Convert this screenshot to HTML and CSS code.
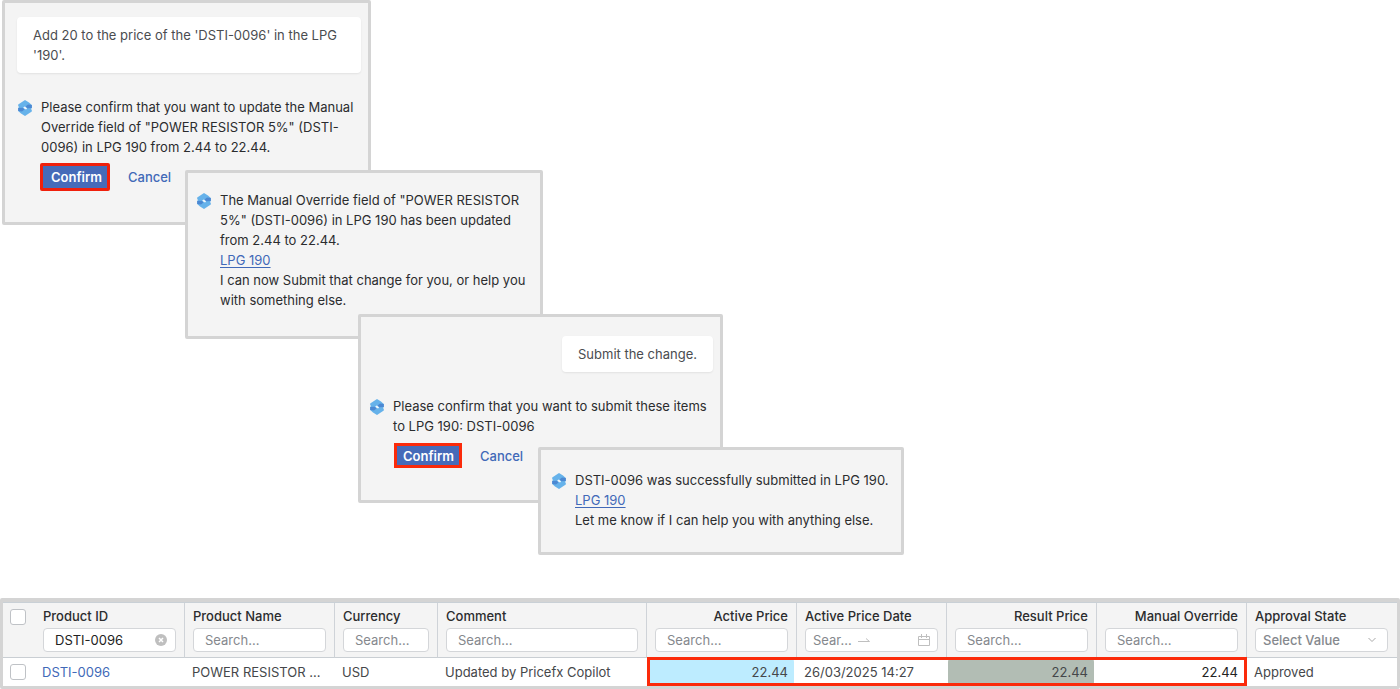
FILE: index.html
```html
<!DOCTYPE html>
<html lang="en">
<head>
<meta charset="utf-8">
<title>Copilot price update</title>
<link rel="stylesheet" href="styles.css">
</head>
<body>
<svg class="defs" aria-hidden="true">
  <symbol id="logo" viewBox="0 0 14 16">
    <path fill="#66b2ea" d="M7 0 11 2.500 13.800 5v3L13 9l.8 1v1.500L7 16 3 13.500.200 11V8L1 7 .2 6V4.500z"/>
    <path fill="#4c88d2" d="M.2 8 4.500 7.800 6.500 9.500 4 11.500.200 11z"/>
    <path fill="#4c88d2" d="M13.800 8 9.500 8.200 7.500 6.500 10 4.500 13.800 5z"/>
    <path fill="#f4f8fc" d="M5.200 7.200 7 6.500 9 8.500 8.600 9.200 7 9.300z"/>
  </symbol>
</svg>

<main class="page">
  <section class="chat">
    <article class="card card-request">
      <p class="bubble">Add 20 to the price of the 'DSTI-0096' in the LPG '190'.</p>
      <div class="message">
        <svg class="logo"><use href="#logo"/></svg>
        <div class="body">
          <p>Please confirm that you want to update the Manual Override field of "POWER RESISTOR 5%" (DSTI-0096) in LPG 190 from 2.44 to 22.44.</p>
          <div class="actions">
            <button class="confirm" type="button">Confirm</button>
            <button class="cancel" type="button">Cancel</button>
          </div>
        </div>
      </div>
    </article>

    <article class="card card-updated">
      <div class="message">
        <svg class="logo"><use href="#logo"/></svg>
        <div class="body">
          <p>The Manual Override field of "POWER RESISTOR 5%" (DSTI-0096) in LPG 190 has been updated from 2.44 to 22.44.</p>
          <p><a class="link" href="#">LPG 190</a></p>
          <p>I can now Submit that change for you, or help you with something else.</p>
        </div>
      </div>
    </article>

    <article class="card card-submit">
      <p class="bubble bubble-short">Submit the change.</p>
      <div class="message">
        <svg class="logo"><use href="#logo"/></svg>
        <div class="body">
          <p>Please confirm that you want to submit these items to LPG 190: DSTI-0096</p>
          <div class="actions">
            <button class="confirm" type="button">Confirm</button>
            <button class="cancel" type="button">Cancel</button>
          </div>
        </div>
      </div>
    </article>

    <article class="card card-done">
      <div class="message">
        <svg class="logo"><use href="#logo"/></svg>
        <div class="body">
          <p>DSTI-0096 was successfully submitted in LPG 190.</p>
          <p><a class="link" href="#">LPG 190</a></p>
          <p>Let me know if I can help you with anything else.</p>
        </div>
      </div>
    </article>
  </section>

  <div class="grid">
    <table class="prices">
      <colgroup>
        <col class="w-check"><col class="w-std"><col class="w-std"><col class="w-currency"><col class="w-comment">
        <col class="w-std"><col class="w-std"><col class="w-std"><col class="w-std"><col class="w-std">
      </colgroup>
      <thead>
        <tr>
          <th class="check"><input type="checkbox" aria-label="Select all rows"></th>
          <th>
            <label for="f-id">Product ID</label>
            <div class="field">
              <input id="f-id" type="text" value="DSTI-0096">
              <button class="clear" type="button" aria-label="Clear">
                <svg viewBox="0 0 12 12"><circle cx="6" cy="6" r="6" fill="#bfbfbf"/><path d="M4 4l4 4M8 4l-4 4" stroke="#fff" stroke-width="1.5"/></svg>
              </button>
            </div>
          </th>
          <th><label for="f-name">Product Name</label><div class="field"><input id="f-name" type="text" placeholder="Search..."></div></th>
          <th><label for="f-cur">Currency</label><div class="field"><input id="f-cur" type="text" placeholder="Search..."></div></th>
          <th><label for="f-com">Comment</label><div class="field"><input id="f-com" type="text" placeholder="Search..."></div></th>
          <th class="num"><label for="f-act">Active Price</label><div class="field"><input id="f-act" type="text" placeholder="Search..."></div></th>
          <th>
            <label for="f-date">Active Price Date</label>
            <div class="field field-date">
              <input id="f-date" type="text" placeholder="Sear...">
              <svg class="arrow" viewBox="0 0 12 8"><path d="M0 5.500h11.500L8 2.500" fill="none" stroke="#bfbfbf"/></svg>
              <svg class="calendar" viewBox="0 0 12 12"><path d="M.5 2.500h11v9H.5zM.5 5.500h11M3.500 0v4M8.500 0v4" fill="none" stroke="#bfbfbf"/></svg>
            </div>
          </th>
          <th class="num"><label for="f-res">Result Price</label><div class="field"><input id="f-res" type="text" placeholder="Search..."></div></th>
          <th class="num"><label for="f-man">Manual Override</label><div class="field"><input id="f-man" type="text" placeholder="Search..."></div></th>
          <th>
            <label for="f-state">Approval State</label>
            <div class="field field-select">
              <select id="f-state"><option>Select Value</option></select>
              <svg class="chevron" viewBox="0 0 8 6"><path d="M.5 1 4 4.500 7.500 1" fill="none" stroke="#a8a8a8"/></svg>
            </div>
          </th>
        </tr>
      </thead>
      <tbody>
        <tr>
          <td class="check"><input type="checkbox" aria-label="Select DSTI-0096"></td>
          <td><a class="id" href="#">DSTI-0096</a></td>
          <td>POWER RESISTOR ...</td>
          <td>USD</td>
          <td>Updated by Pricefx Copilot</td>
          <td class="num fill framed"><span class="tint tint-blue">22.44</span></td>
          <td>26/03/2025 14:27</td>
          <td class="num fill"><span class="tint tint-green">22.44</span></td>
          <td class="num override">22.44</td>
          <td>Approved</td>
        </tr>
      </tbody>
    </table>
  </div>
</main>
</body>
</html>
```
FILE: styles.css
```css
*, *::before, *::after { box-sizing: border-box; }

body {
  margin: 0;
  background: #fff;
  color: #2b2c2e;
  font: 13px/20px Inter, "Liberation Sans", sans-serif;
}

p { margin: 0; }
button, input, select { font: inherit; }
.defs { display: none; }

.page { display: flex; flex-direction: column; }

/* Cascading conversation cards */
.chat { display: flex; flex-direction: column; align-items: flex-start; }

.card {
  position: relative;
  border: 3px solid #d4d4d4;
  border-radius: 2px;
  background: #f4f4f4;
}

.card-request { width: 369px; margin-left: 2px; padding: 14px 7px 31px 12px; }
.card-updated { width: 358px; margin: -55px 0 0 185px; padding: 17px 12px 26px 9px; }
.card-submit { width: 365px; margin: -25px 0 0 358px; padding: 19px 7px 30px 9px; }
.card-done { width: 366px; margin: -56px 0 0 538px; padding: 20px 6px 22px 11px; }

.bubble {
  margin-bottom: 24px;
  padding: 8px 16px;
  border-radius: 4px;
  background: #fff;
  box-shadow: 0 1px 2px rgba(0, 0, 0, 0.08);
  color: #4a4c50;
}
.bubble-short { width: fit-content; margin-left: auto; }

.message { display: flex; gap: 9px; }
.card-request .message { padding-left: 1px; }
.logo { flex: none; width: 14px; height: 16px; margin-top: 3px; }
.body { flex: 1; min-width: 0; }

.link { color: #4169b8; text-decoration: underline; text-underline-offset: 2px; }

.actions { display: flex; align-items: center; height: 28px; margin-top: 6px; gap: 7px; }
.confirm, .cancel { height: 28px; font-weight: 600; white-space: nowrap; }
.confirm {
  margin-left: -1px;
  padding: 0 5px 0 8px;
  border: 3px solid #f0200c;
  border-radius: 2px;
  background: #466bb9;
  color: #fff;
}
.cancel { padding: 0 10px 0 11px; border: 0; background: transparent; color: #4169b8; font-weight: 500; }
.card-submit .actions { align-items: flex-start; }
.card-submit .confirm { height: 25px; margin: 1px 0 0 1px; padding: 0 5px 0 6px; border-color: #fb2a0a; border-radius: 0; }

/* Price grid */
.grid {
  margin-top: 43px;
  border: 3px solid #d4d4d4;
  border-top-width: 4px;
  border-radius: 2px;
}

.prices {
  width: 100%;
  table-layout: fixed;
  border-spacing: 0;
  border-top: 1px solid #c9d0d6;
}
.w-check { width: 32px; }
.w-std { width: 150px; }
.w-currency { width: 103px; }
.w-comment { width: 209px; }

th {
  padding: 3px 8px 5px;
  border-right: 1px solid #cfd3d8;
  border-bottom: 1px solid #c9ced3;
  background: #f4f4f4;
  font-weight: 500;
  text-align: left;
  vertical-align: top;
}
th label { display: block; margin-bottom: 2px; white-space: nowrap; }
th.check { padding: 6px 0 0 7px; border-right: 0; }
th:last-child { border-right: 0; padding-right: 9px; }
.num { text-align: right; }

td { height: 28px; padding: 0 9px 0 7px; color: #45474a; white-space: nowrap; }
td.check { padding: 0 0 0 7px; }

input[type="checkbox"] {
  display: block;
  appearance: none;
  width: 16px;
  height: 16px;
  margin: 0;
  border: 1px solid #bfc2c6;
  border-radius: 3px;
  background: #fff;
}

.field {
  display: flex;
  align-items: center;
  height: 24px;
  padding: 0 11px;
  border: 1px solid #d4d6d9;
  border-radius: 4px;
  background: #fff;
  font-weight: 400;
}
.field input, .field select {
  flex: 1;
  min-width: 0;
  width: 0;
  height: 20px;
  padding: 0;
  border: 0;
  outline: 0;
  background: transparent;
  color: #222;
}
.field input::placeholder { color: #85888d; opacity: 1; }
.field svg { display: block; flex: none; }

.clear { width: 12px; height: 12px; margin-right: -3px; padding: 0; border: 0; background: none; }
.clear svg { width: 12px; height: 12px; }
.field-date { padding: 0 7px; }
.field-date input { flex: none; width: 40px; }
.arrow { width: 12px; height: 8px; margin-left: 5px; }
.calendar { width: 12px; height: 12px; margin-left: auto; }
.field-select { padding: 0 11px 0 7px; }
.field .chevron { width: 8px; height: 6px; }
.field select { appearance: none; color: #85888d; font-weight: 500; }

.id { color: #4169b8; text-decoration: none; }

td.fill { padding: 0 3px 0 1px; }
.tint { display: block; padding: 4px 6px; border-radius: 4px; }
.tint-blue { background: #bdecff; }
.tint-green { background: #b2bdb4; }
.override { color: #222; }

/* Red frame spanning the four price cells */
.framed { position: relative; }
.framed::after {
  content: "";
  position: absolute;
  top: -1px;
  left: 0;
  width: 400%;
  height: 29px;
  border: 3px solid #fb2a0a;
}
```
